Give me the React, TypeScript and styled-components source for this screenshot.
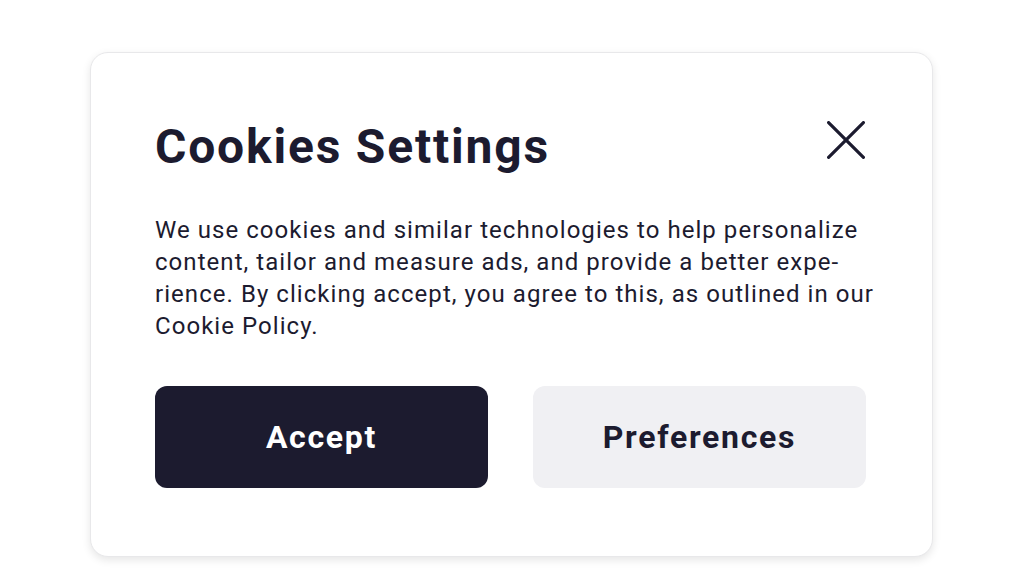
import styled, { createGlobalStyle } from "styled-components";

const Global = createGlobalStyle`
  html, body {
    margin: 0;
    padding: 0;
    background: #ffffff;
    font-family: Roboto, "Liberation Sans", sans-serif;
  }
`;

const Page = styled.div`
  width: 1024px;
  height: 576px;
  padding-top: 52px;
  padding-left: 90px;
  box-sizing: border-box;
`;

const Card = styled.section`
  width: 843px;
  height: 505px;
  box-sizing: border-box;
  padding: 62px 66px 0 64px;
  background: #fff;
  border-radius: 18px;
  border: 1px solid #e8e8ea;
  box-shadow: 0 3px 8px rgba(0, 0, 0, 0.1);
  display: flex;
  flex-direction: column;
`;

const Header = styled.div`
  display: flex;
  justify-content: space-between;
  align-items: flex-start;
`;

const Title = styled.h2`
  margin: 0;
  font-size: 48px;
  line-height: 64px;
  font-weight: 700;
  letter-spacing: 1.8px;
  color: #1c1b2f;
`;

const CloseButton = styled.button`
  border: none;
  background: none;
  padding: 0;
  margin-top: 6px;
  margin-right: 1px;
  width: 38px;
  height: 38px;
  cursor: pointer;
`;

const Body = styled.p`
  margin: 35px -12px 0 0;
  font-size: 24px;
  line-height: 32px;
  letter-spacing: 1.05px;
  color: #1c1b2f;
  hyphens: manual;
`;

const Actions = styled.div`
  display: grid;
  grid-template-columns: 1fr 1fr;
  gap: 45px;
  margin-top: 44px;
`;

const Button = styled.button<{ $primary?: boolean }>`
  height: 102px;
  border: none;
  border-radius: 12px;
  font-family: Roboto, "Liberation Sans", sans-serif;
  font-size: 32px;
  font-weight: 700;
  letter-spacing: 1.7px;
  background: ${({ $primary }) => ($primary ? "#1c1b2f" : "#f0f0f3")};
  color: ${({ $primary }) => ($primary ? "#ffffff" : "#1c1b2f")};
  cursor: pointer;
`;

export default function App() {
  return (
    <Page>
      <Global />
      <Card>
        <Header>
          <Title>Cookies Settings</Title>
          <CloseButton aria-label="Close">
            <svg width="38" height="38" viewBox="0 0 38 38">
              <path d="M1.6 1.6 L36.4 36.4 M36.4 1.6 L1.6 36.4" stroke="#1c1b2f" strokeWidth="3.2" strokeLinecap="round" />
            </svg>
          </CloseButton>
        </Header>
        <Body lang="en">
          We use cookies and similar technologies to help personalize content, tailor and measure ads, and provide a better expe&shy;rience. By clicking accept, you agree to this, as outlined in our Cookie Policy.
        </Body>
        <Actions>
          <Button $primary>Accept</Button>
          <Button>Preferences</Button>
        </Actions>
      </Card>
    </Page>
  );
}
